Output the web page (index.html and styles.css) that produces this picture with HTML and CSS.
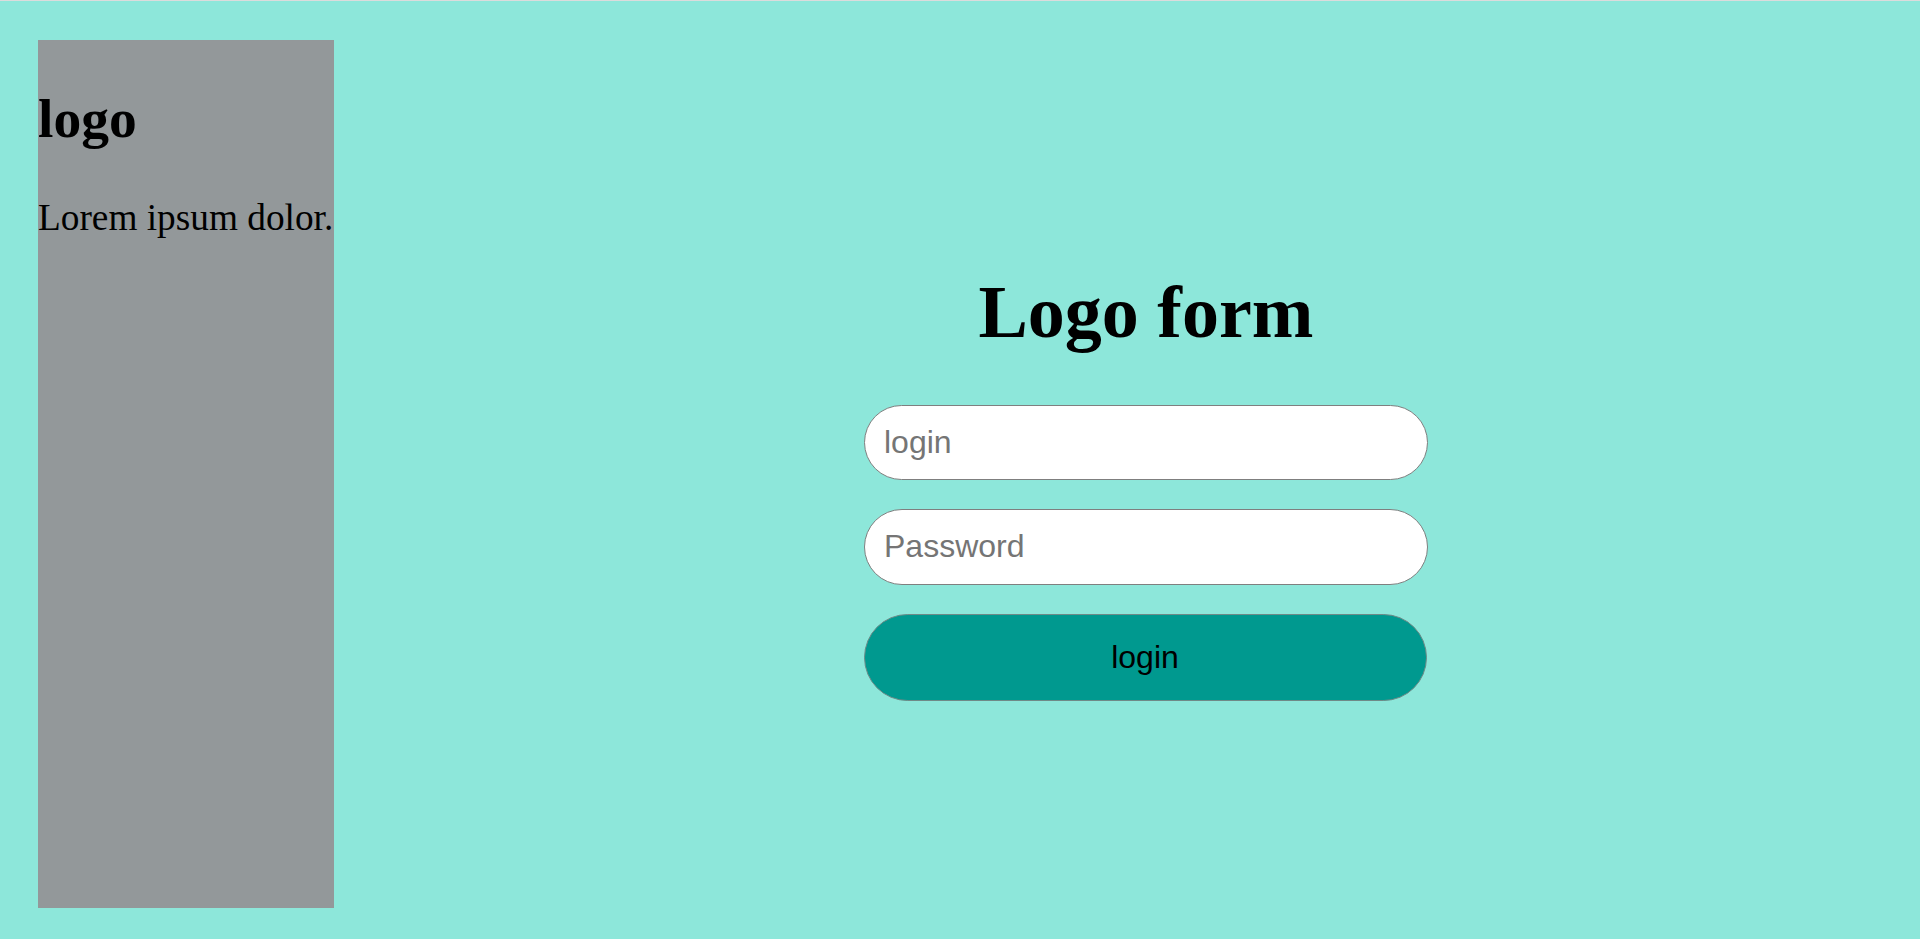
FILE: index.html
```html
<!DOCTYPE html>
<html lang="en">
<head>
<meta charset="utf-8">
<title>Logo form</title>
<link rel="stylesheet" href="styles.css">
</head>
<body>
<div class="page">
  <aside class="sidebar">
    <h2 class="brand">logo</h2>
    <p class="tagline">Lorem ipsum dolor.</p>
  </aside>
  <main class="main">
    <h1 class="title">Logo form</h1>
    <form class="form">
      <input class="field" type="text" placeholder="login">
      <input class="field field-pass" type="password" placeholder="Password">
      <button class="submit" type="button">login</button>
    </form>
  </main>
</div>
</body>
</html>
```

FILE: styles.css
```css
html, body {
  margin: 0;
  padding: 0;
}
body {
  background: #8de7da;
  border-top: 1px solid #dcdcdc;
  font-family: "Liberation Serif", "Times New Roman", serif;
  font-size: 37px;
  color: #000;
}
.page {
  box-sizing: border-box;
  height: 938px;
  display: flex;
  padding: 39px 0 31px 38px;
}
.sidebar {
  width: 296px;
  flex: none;
  background: #93989a;
  overflow: hidden;
}
.brand {
  font-size: 55.5px;
  font-weight: bold;
  margin: 47px 0 46px;
  line-height: 1.15;
  white-space: nowrap;
}
.tagline {
  margin: 0;
  font-size: 37.3px;
  line-height: 1.15;
  white-space: nowrap;
}
.main {
  flex: 1;
  margin-left: 38px;
  display: flex;
  flex-direction: column;
  align-items: center;
  justify-content: center;
}
.title {
  font-size: 74px;
  font-weight: bold;
  line-height: 85px;
  margin: 50px 0;
}
.form {
  display: flex;
  flex-direction: column;
  align-items: center;
  gap: 29px;
  margin-bottom: 28px;
}
.field {
  box-sizing: border-box;
  width: 564px;
  height: 75px;
  border: 1px solid #7f7f7f;
  border-radius: 38px;
  background: #fff;
  padding: 0 19px;
  font-family: "Liberation Sans", Arial, sans-serif;
  font-size: 32px;
  color: #000;
  outline: none;
}
.field-pass {
  height: 76px;
}
.field::placeholder {
  color: #757575;
}
.submit {
  box-sizing: border-box;
  width: 563px;
  height: 87px;
  border: 1px solid #6f8a87;
  border-radius: 44px;
  background: #00998f;
  font-family: "Liberation Sans", Arial, sans-serif;
  font-size: 32px;
  color: #000;
  padding: 0;
  margin-left: -2px;
}
```
